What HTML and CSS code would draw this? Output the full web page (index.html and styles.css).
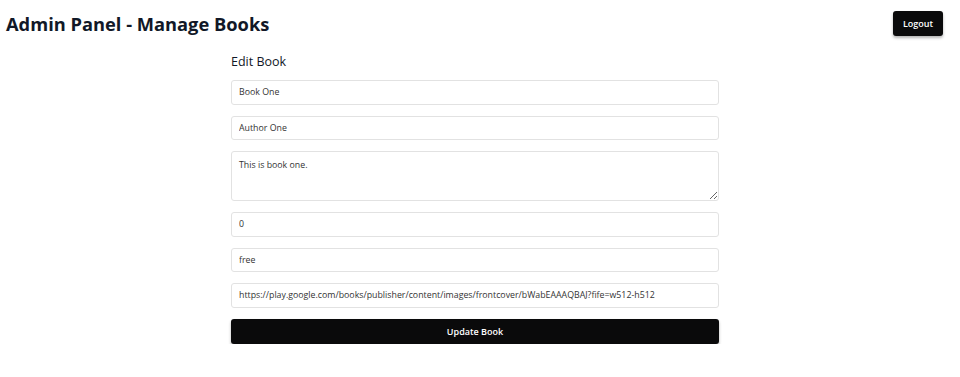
FILE: index.html
```html
<!DOCTYPE html>
<html lang="en">
<head>
<meta charset="utf-8">
<title>Admin Panel - Manage Books</title>
<link rel="stylesheet" href="styles.css">
</head>
<body>
<header class="topbar">
  <h1 class="title">Admin Panel - Manage Books</h1>
  <button class="logout" type="button">Logout</button>
</header>
<main class="main">
  <form class="edit-form">
    <h2 class="form-title">Edit Book</h2>
    <div class="fields">
      <input class="field" type="text" value="Book One">
      <input class="field" type="text" value="Author One">
      <textarea class="field area">This is book one.</textarea>
      <input class="field" type="text" value="0">
      <input class="field" type="text" value="free">
      <input class="field" type="text" value="https://play.google.com/books/publisher/content/images/frontcover/bWabEAAAQBAJ?fife=w512-h512">
      <button class="submit" type="button">Update Book</button>
    </div>
  </form>
</main>
</body>
</html>
```
FILE: styles.css
```css
* { box-sizing: border-box; }
body {
  margin: 0;
  background: #ffffff;
  font-family: "Open Sans", "Noto Sans", "Liberation Sans", sans-serif;
  color: #111827;
}
.topbar {
  display: flex;
  justify-content: space-between;
  align-items: flex-start;
  padding: 11px 17px 0 6px;
}
.title {
  margin: 0;
  font-size: 18.3px;
  line-height: 26px;
  font-weight: 700;
  color: #111827;
}
.logout {
  width: 50px;
  height: 25px;
  border: none;
  border-radius: 3px;
  background: #0a0a0b;
  color: #ffffff;
  font-family: inherit;
  font-size: 9px;
  font-weight: 600;
  box-shadow: 0 2px 3px rgba(0,0,0,0.3);
  padding: 0;
}
.main {
  padding-right: 10px;
}
.edit-form {
  width: 488px;
  margin: 0 auto;
}
.form-title {
  margin: 16px 0 9px;
  font-size: 12.5px;
  line-height: 18px;
  font-weight: 500;
  color: #111827;
}
.fields {
  display: flex;
  flex-direction: column;
  gap: 11px;
}
.field {
  display: block;
  width: 100%;
  height: 24.5px;
  border: 1px solid #e2e2e2;
  border-radius: 3px;
  padding: 0 7px;
  font-family: inherit;
  font-size: 8.8px;
  color: #333333;
  background: #ffffff;
  outline: none;
}
.area {
  height: 50px;
  padding: 7px 7px;
  resize: vertical;
}
.submit {
  width: 100%;
  height: 25px;
  border: none;
  border-radius: 3px;
  background: #0a0a0b;
  color: #ffffff;
  font-family: inherit;
  font-size: 9px;
  font-weight: 600;
  box-shadow: 0 2px 3px rgba(0,0,0,0.3);
}
```
